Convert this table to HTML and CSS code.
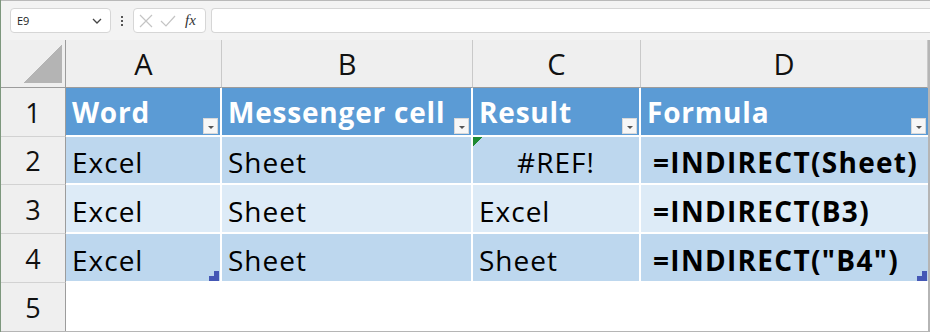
FILE: index.html
```html
<!DOCTYPE html>
<html lang="en">
<head>
    <meta charset="UTF-8">
    <title>INDIRECT - Sheet1</title>
    <link rel="stylesheet" href="styles.css">
</head>
<body>
<div class="formula-bar">
    <div class="name-box">
        <span>E9</span>
        <svg class="chevron" width="10" height="6" viewBox="0 0 10 6"><path d="M1 1l4 4 4-4" fill="none" stroke="#444" stroke-width="1.3"/></svg>
    </div>
    <div class="grip"><i></i><i></i><i></i></div>
    <div class="fx-buttons">
        <svg width="14" height="14" viewBox="0 0 14 14"><path d="M1 1l12 12M13 1L1 13" stroke="#c4c4c4" stroke-width="1.2"/></svg>
        <svg width="16" height="14" viewBox="0 0 16 14"><path d="M1 7l5 5L15 2" fill="none" stroke="#c4c4c4" stroke-width="1.2"/></svg>
        <span class="fx">fx</span>
    </div>
    <div class="formula-input"></div>
</div>

<div class="sheet">
    <!-- column headers -->
    <div class="corner"><span class="corner-tri"></span></div>
    <div class="col-head">A</div>
    <div class="col-head">B</div>
    <div class="col-head">C</div>
    <div class="col-head">D</div>

    <!-- row 1: table header -->
    <div class="row-head">1</div>
    <div class="cell th">Word<span class="filter"></span></div>
    <div class="cell th">Messenger cell<span class="filter"></span></div>
    <div class="cell th">Result<span class="filter"></span></div>
    <div class="cell th">Formula<span class="filter"></span></div>

    <div class="row-head">2</div>
    <div class="cell band">Excel</div>
    <div class="cell band">Sheet</div>
    <div class="cell band center">#REF!<span class="err-flag"></span></div>
    <div class="cell band bold">=INDIRECT(Sheet)</div>

    <div class="row-head">3</div>
    <div class="cell light">Excel</div>
    <div class="cell light">Sheet</div>
    <div class="cell light">Excel</div>
    <div class="cell light bold">=INDIRECT(B3)</div>

    <div class="row-head">4</div>
    <div class="cell band">Excel<span class="handle"></span></div>
    <div class="cell band">Sheet</div>
    <div class="cell band">Sheet</div>
    <div class="cell band bold">=INDIRECT("B4")<span class="handle"></span></div>

    <div class="row-head last">5</div>
    <div class="cell empty"></div>
    <div class="cell empty"></div>
    <div class="cell empty"></div>
    <div class="cell empty"></div>
</div>
</body>
</html>
```

FILE: styles.css
```css
* {
    box-sizing: border-box;
}
body {
    margin: 0;
    width: 930px;
    height: 332px;
    overflow: hidden;
    background: #fff;
    font-family: "Open Sans", "Liberation Sans", sans-serif;
    border-left: 1px solid #7d977d;
}

/* formula bar */
.formula-bar {
    height: 40px;
    background: #f3f3f3;
    border-top: 1px solid #b9b9b9;
    display: flex;
    align-items: center;
    padding: 0 0 0 9px;
}
.name-box {
    width: 101px;
    height: 25px;
    background: #fff;
    border: 1px solid #d6d6d6;
    border-radius: 4px;
    display: flex;
    align-items: center;
    justify-content: space-between;
    padding: 0 8px 0 6px;
    font-size: 11px;
    color: #222;
}
.grip {
    width: 22px;
    display: flex;
    flex-direction: column;
    align-items: center;
    gap: 2px;
}
.grip i {
    width: 2px;
    height: 2px;
    background: #555;
}
.fx-buttons {
    width: 73px;
    height: 25px;
    background: #fff;
    border: 1px solid #d6d6d6;
    border-radius: 4px;
    display: flex;
    align-items: center;
    gap: 7px;
    padding-left: 5px;
}
.fx {
    font-family: "Liberation Serif", serif;
    font-style: italic;
    font-size: 15px;
    color: #333;
    margin-left: 2px;
}
.formula-input {
    flex: 1;
    height: 25px;
    margin-left: 5px;
    background: #fff;
    border: 1px solid #d6d6d6;
    border-right: 0;
    border-radius: 4px 0 0 4px;
}

/* grid */
.sheet {
    display: grid;
    grid-template-columns: 65px 156px 251px 168px 287px;
    grid-template-rows: 48px 49px 48px 49px 49px 48px;
    border-right: 2px solid #b5b5b5;
    border-bottom: 1px solid #b5b5b5;
    width: 929px;
}
.corner, .col-head, .row-head {
    background: #efefef;
    color: #111;
    display: flex;
    align-items: center;
    justify-content: center;
    font-size: 29px;
}
.corner {
    border-right: 1px solid #9c9c9c;
    border-bottom: 1px solid #9c9c9c;
    align-items: flex-end;
    justify-content: flex-end;
    padding: 0 3px 4px 0;
}
.corner-tri {
    width: 39px;
    height: 38px;
    background: linear-gradient(to top left, #b4b4b4 50%, transparent 50%);
}
.col-head {
    border-right: 1px solid #c9c9c9;
    border-bottom: 1px solid #9c9c9c;
}
.row-head {
    border-right: 1px solid #9c9c9c;
    border-bottom: 1px solid #d2d2d2;
    font-size: 27px;
}
.row-head.last {
    border-bottom: 0;
}

.cell {
    position: relative;
    display: flex;
    align-items: center;
    padding: 4px 0 0 6px;
    font-size: 28px;
    letter-spacing: 1px;
    color: #000;
    white-space: nowrap;
    overflow: hidden;
    border-right: 2px solid #fff;
    border-bottom: 2px solid #fff;
}
.cell.th {
    background: #5b9bd5;
    color: #fff;
    font-weight: 700;
    letter-spacing: 0.8px;
    padding-top: 0;
}
.cell.band {
    background: #bdd7ee;
}
.cell.light {
    background: #ddebf7;
}
.cell.bold {
    font-weight: 700;
    letter-spacing: 1.3px;
    padding-left: 12px;
}
.cell.center {
    justify-content: center;
    padding-left: 0;
}
.cell.empty {
    border: 0;
}
.sheet .cell:nth-child(5n) {
    border-right: 0;
}

/* autofilter button */
.filter {
    position: absolute;
    right: 2px;
    bottom: 1px;
    width: 15px;
    height: 16px;
    background: #f7f7f7;
    border: 1px solid #d9d9d9;
}
.filter::after {
    content: "";
    position: absolute;
    left: 4px;
    top: 7px;
    border-left: 3px solid transparent;
    border-right: 3px solid transparent;
    border-top: 3px solid #555;
}

/* green error indicator */
.err-flag {
    position: absolute;
    left: 0;
    top: 0;
    width: 10px;
    height: 9px;
    background: linear-gradient(to bottom right, #1e8a32 50%, transparent 50%);
}

/* table resize handle */
.handle {
    position: absolute;
    right: 1px;
    bottom: 0;
    width: 10px;
    height: 10px;
    background: #4457b5;
    clip-path: polygon(50% 0, 100% 0, 100% 100%, 0 100%, 0 50%, 50% 50%);
}
```
